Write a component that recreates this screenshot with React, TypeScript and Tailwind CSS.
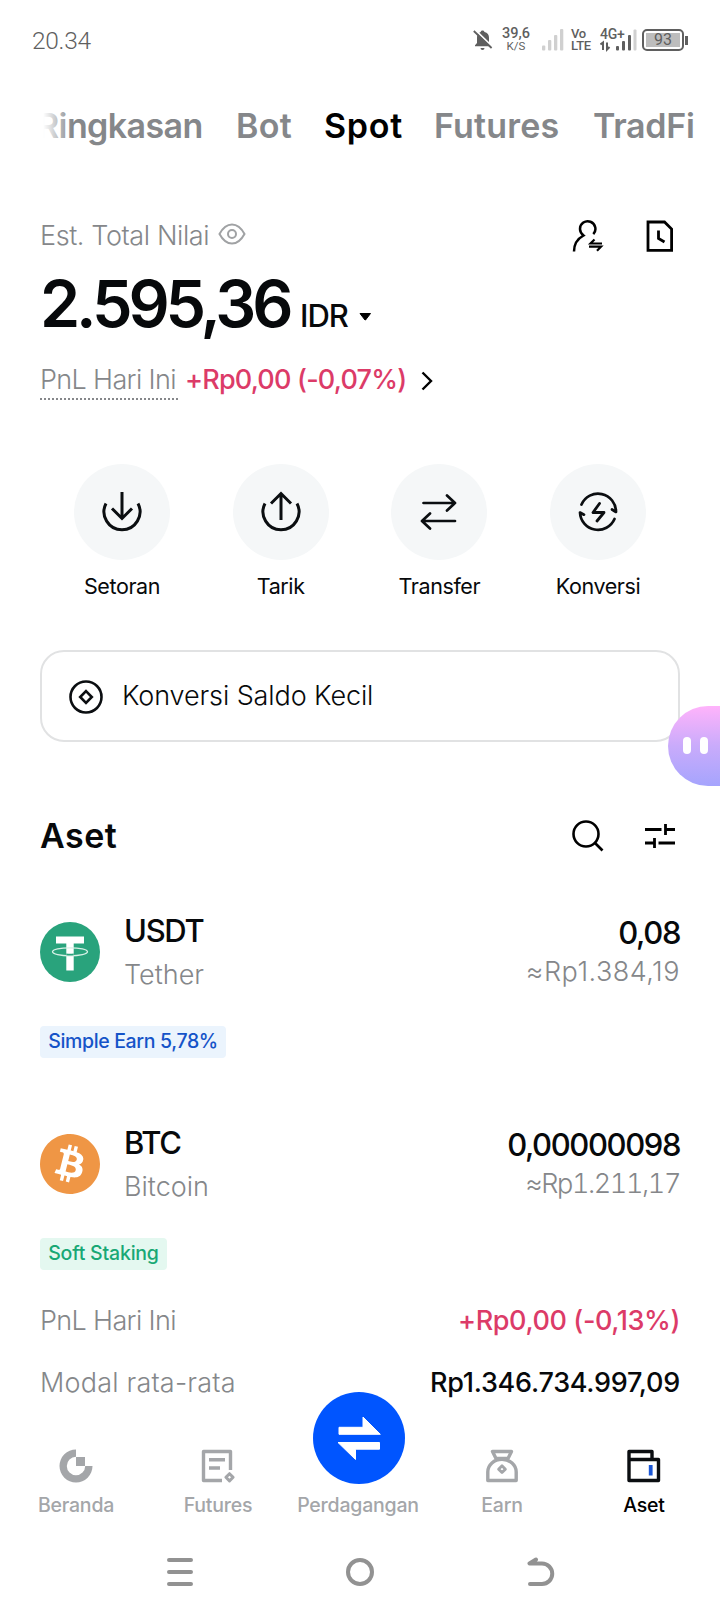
import React from 'react';
import { SiBitcoin } from 'react-icons/si';

const tabs = [
  { label: 'Bot', className: 'ml-[32px] w-[57px] tracking-[0.3px]' },
  { label: 'Spot', active: true, className: 'ml-[31px] w-[79px] tracking-[0.7px]' },
  { label: 'Futures', className: 'ml-[31px] w-[128px] tracking-[0.2px]' },
  { label: 'TradFi', className: 'ml-[31px] w-[102px] tracking-[-0.3px]' },
];

function StatusBar() {
  return (
    <div className="flex h-20 shrink-0 items-center pl-8 pr-8 font-[Roboto,sans-serif] text-[#5f5f5f]">
      <span className="pt-[2px] text-[24.5px] font-light tracking-[-0.3px]">20.34</span>
      <div className="ml-auto flex items-center">
        <svg width="20" height="22" viewBox="0 0 20 22" fill="#5f5f5f">
          <path d="M9.5 1.5a2 2 0 0 1 2 1.4A6 6 0 0 1 16 8.8V14l2 2.2v1H2v-1L4 14V8.8a6 6 0 0 1 3.600-5.900 2 2 0 0 1 1.900-1.400z" />
          <path d="M7.500 19h4a2 2 0 0 1-4 0z" />
          <path d="M1.500 .3l18.500 18" stroke="#fff" strokeWidth="2" />
          <path d="M.8 2l17.800 17" stroke="#5f5f5f" strokeWidth="1.800" />
        </svg>
        <div className="ml-2 flex w-[30px] flex-col items-center pb-[2px] leading-none">
          <span className="text-[14.5px] font-medium leading-[14px]">39,6</span>
          <span className="text-[11.5px] leading-[11px]">K/S</span>
        </div>
        <svg className="ml-[11px]" width="22" height="22" viewBox="0 0 22 22" fill="#d0d0d0">
          <rect x="0" y="16.500" width="3.300" height="5" rx="1" />
          <rect x="6" y="11" width="3.300" height="10.500" rx="1" />
          <rect x="12" y="6" width="3.300" height="15.500" rx="1" />
          <rect x="18" y="0" width="3.300" height="21.500" rx="1" />
        </svg>
        <div className="ml-[7px] flex w-[21px] flex-col text-[13px] font-medium leading-[12.5px] tracking-[-0.3px]">
          <span>Vo</span>
          <span>LTE</span>
        </div>
        <div className="relative ml-[8px] h-[24px] w-[38px]">
          <span className="absolute left-0 top-0 text-[14px] font-medium leading-[13px] tracking-[-0.3px]">4G+</span>
          <svg className="absolute left-0 top-0" width="38" height="24" viewBox="0 0 38 24" fill="#5f5f5f">
            <path d="M.5 16.500l2.500-2V22M7 14.500V21.500l2.500-2.500" fill="none" stroke="#5f5f5f" strokeWidth="2" />
            <rect x="16" y="18" width="3" height="4.500" rx="1" />
            <rect x="22" y="13" width="3" height="9.500" rx="1" />
            <rect x="28" y="7" width="3" height="15.500" rx="1" />
            <rect x="33.500" y="1.500" width="3" height="21" rx="1" fill="#d0d0d0" />
          </svg>
        </div>
        <div className="ml-[4px] flex items-center">
          <div className="flex h-[22px] w-[42px] items-center rounded-[5px] border-2 border-[#5f5f5f] p-[2px]">
            <div className="flex h-full w-full items-center justify-center bg-[#bdbdbd] text-[16px] leading-none">93</div>
          </div>
          <div className="ml-[1px] h-[9px] w-[3px] bg-[#5f5f5f]" />
        </div>
      </div>
    </div>
  );
}

function Tabs() {
  return (
    <nav className="relative flex h-[91px] shrink-0 items-center overflow-hidden whitespace-nowrap text-[34px] font-semibold text-[#85878a]">
      <span className="ml-[37px] w-[167px] tracking-[-0.6px]">Ringkasan</span>
      {tabs.map((tab) => (
        <span key={tab.label} className={`${tab.className} ${tab.active ? 'text-black' : ''}`}>
          {tab.label}
        </span>
      ))}
      {/* Fade at the scrolled edge */}
      <div className="absolute left-0 top-0 h-full w-[72px] bg-linear-to-r from-white from-60% to-transparent" />
    </nav>
  );
}

function Summary() {
  return (
    <section className="mt-[39px] shrink-0 px-10">
      <div className="flex h-[52px] items-center">
        <span className="text-[27px] font-light tracking-[-0.4px] text-[#85878a]">Est. Total Nilai</span>
        <svg className="mb-1 ml-[9px]" width="28" height="24" viewBox="0 0 28 24" fill="none" stroke="#a0a2a4" strokeWidth="2">
          <path d="M1.500 12C5 5.500 9 2.500 14 2.500S23 5.500 26.500 12C23 18.500 19 21.500 14 21.500S5 18.500 1.500 12z" />
          <circle cx="14" cy="12" r="4" />
        </svg>
        <svg className="ml-auto" width="32" height="34" viewBox="0 0 32 34" fill="none" stroke="#000" strokeWidth="2.500">
          <path d="M2 32.500c0-7.500 3.200-12.600 9.500-16C8.800 14.300 8 12.300 8 10a7.700 7.700 0 1 1 13.300 5.200" />
          <path d="M30 24.500H18.500l4-4M17 27.700h12l-4 4" strokeWidth="2.200" />
        </svg>
        <svg className="ml-[42px] mr-[6px]" width="28" height="32" viewBox="0 0 28 32" fill="none" stroke="#000" strokeWidth="2.800">
          <path d="M2 2h16.500l7.100 7v21.300H2z" />
          <path d="M12.500 10.500v8l6 3.500" />
        </svg>
      </div>

      <div className="flex h-[83px] items-baseline leading-[84px]">
        <span className="w-[252px] whitespace-nowrap text-[64.5px] font-semibold tracking-[-4.1px]">2.595,36</span>
        <span className="ml-[8px] w-[50px] text-[31px] font-medium tracking-[-1px]">IDR</span>
        <svg className="ml-[9px] self-center" width="12" height="40" viewBox="0 0 12 40">
          <path d="M1 29.500h10.500l-5 6.500h-.500z" fill="#000" stroke="#000" strokeLinejoin="round" />
        </svg>
      </div>

      <div className="flex h-[71px] items-center text-[27px]">
        <span className="relative w-[138px] whitespace-nowrap font-light tracking-[-0.65px] text-[#85878a]">
          PnL Hari Ini
          <span className="absolute inset-x-0 bottom-[1px] border-b-2 border-dotted border-[#85878a]" />
        </span>
        <span className="ml-[7px] w-[222px] whitespace-nowrap font-medium tracking-[-0.8px] text-[#dc3b68]">+Rp0,00 (-0,07%)</span>
        <svg className="ml-[13px]" width="13" height="20" viewBox="0 0 13 20" fill="none" stroke="#000" strokeWidth="2.400">
          <path d="M2.500 1.500l8.500 8.500-8.500 8.500" />
        </svg>
      </div>
    </section>
  );
}

function DepositIcon() {
  return (
    <svg width="48" height="48" viewBox="0 0 48 48" fill="none" stroke="#0b0e11" strokeWidth="3">
      <path d="M8 15.500a18 18 0 1 0 32 0M24 4v26M14 20.500l10 10 10-10" />
    </svg>
  );
}

function WithdrawIcon() {
  return (
    <svg width="48" height="48" viewBox="0 0 48 48" fill="none" stroke="#0b0e11" strokeWidth="3">
      <path d="M8 15.500a18 18 0 1 0 32 0M24 32V6M14 15.500l10-10 10 10" />
    </svg>
  );
}

function TransferIcon() {
  return (
    <svg width="48" height="48" viewBox="0 0 48 48" fill="none" stroke="#0b0e11" strokeWidth="2.700" strokeLinecap="round" strokeLinejoin="round">
      <path d="M8.500 15H40M32 7.500l8 7.500-8 7.500M40 33H7.500M15 25.500L7 33l8 7.500" />
    </svg>
  );
}

function ConvertIcon() {
  return (
    <svg width="48" height="48" viewBox="0 0 48 48" fill="none" stroke="#0b0e11" strokeWidth="2.700" strokeLinecap="round" strokeLinejoin="round">
      <path d="M7.500 16.500A18 18 0 0 1 42 24l-4-2.500M40.500 31A18 18 0 0 1 6 24.500l4 2.200" />
      <path d="M25.500 15.500l-6.500 9h11l-7 8.500" strokeWidth="2.800" />
    </svg>
  );
}

const actions = [
  { label: 'Setoran', icon: <DepositIcon /> },
  { label: 'Tarik', icon: <WithdrawIcon /> },
  { label: 'Transfer', icon: <TransferIcon /> },
  { label: 'Konversi', icon: <ConvertIcon /> },
];

function Actions() {
  return (
    <section className="mt-12 grid shrink-0 grid-cols-4 px-[42.700px]">
      {actions.map((action) => (
        <div key={action.label} className="flex flex-col items-center">
          <div className="flex h-24 w-24 items-center justify-center rounded-full bg-[#f5f7f8]">{action.icon}</div>
          <span className="mt-3 text-[21.5px] leading-7 tracking-[-0.4px]">{action.label}</span>
        </div>
      ))}
    </section>
  );
}

function TetherIcon() {
  return (
    <svg width="60" height="60" viewBox="0 0 60 60">
      <circle cx="30" cy="30" r="30" fill="#29a37c" />
      <path d="M16 14.500h28v7h-10.300V48.500h-7.400V21.500H16z" fill="#fff" />
      <ellipse cx="30" cy="29.800" rx="17.500" ry="4" fill="none" stroke="#d5f0e5" strokeWidth="1.300" />
      <path d="M26.300 31.500q3.700.5 7.400 0v1.800q-3.700.5-7.400 0z" fill="#29a37c" />
    </svg>
  );
}

function BitcoinIcon() {
  return (
    <div className="rounded-full bg-white">
      <SiBitcoin className="text-[#ef9645]" size={60} />
    </div>
  );
}

interface AssetProps {
  icon: React.ReactNode;
  symbol: string;
  name: string;
  amount: string;
  value: string;
  valueClass: string;
}

function Asset({ icon, symbol, name, amount, value, valueClass }: AssetProps) {
  return (
    <div className="flex h-20 items-center">
      {icon}
      <div className="ml-6 flex flex-col gap-[7px]">
        <span className="text-[31px] font-medium leading-[37px] tracking-[-1.3px]">{symbol}</span>
        <span className="text-[27px] font-light leading-[37px] text-[#85878a]">{name}</span>
      </div>
      <div className="ml-auto flex flex-col gap-[2px] text-right">
        <span className="text-[31px] font-medium leading-[37px] tracking-[-1.4px]">{amount}</span>
        <span className={`text-[27px] font-light leading-[38px] text-[#85878a] ${valueClass}`}>{value}</span>
      </div>
    </div>
  );
}

function Assets() {
  return (
    <section className="shrink-0 px-10">
      <div className="mt-16 flex h-[59px] items-center">
        <h2 className="text-[34px] font-semibold tracking-[0.5px]">Aset</h2>
        <svg className="ml-auto" width="34" height="34" viewBox="0 0 34 34" fill="none" stroke="#000" strokeWidth="2.600">
          <circle cx="15" cy="15" r="12.500" />
          <path d="M23.500 23.500l8 8" />
        </svg>
        <svg className="ml-[39px] mr-[4px]" width="32" height="26" viewBox="0 0 32 26" fill="none" stroke="#000" strokeWidth="2.800">
          <path d="M1 6.500h16.500M21.500 1v11M21.500 6.500H31M1 20h9.500M10.500 15v10M14.500 20H31" />
        </svg>
      </div>

      <div className="mt-[47px]">
        <Asset
          icon={<TetherIcon />}
          symbol="USDT"
          name="Tether"
          amount="0,08"
          value="≈Rp1.384,19"
          valueClass="tracking-[0.5px]"
        />
        <span className="mt-[34px] flex h-8 w-[186px] items-center justify-center rounded bg-[#ebf4fd] text-[19.5px] font-medium tracking-[-0.35px] text-[#1553c8]">
          Simple Earn 5,78%
        </span>
      </div>

      <div className="mt-[66px]">
        <Asset
          icon={<BitcoinIcon />}
          symbol="BTC"
          name="Bitcoin"
          amount="0,00000098"
          value="≈Rp1.211,17"
          valueClass="tracking-[-1.4px] tabular-nums"
        />
        <span className="mt-[34px] flex h-8 w-[127px] items-center justify-center rounded bg-[#e4f8f0] text-[19.5px] font-medium tracking-[-0.2px] text-[#18a875]">
          Soft Staking
        </span>
      </div>

      <div className="mt-[31px] flex h-10 items-center justify-between text-[27px]">
        <span className="font-light tracking-[-0.65px] text-[#85878a]">PnL Hari Ini</span>
        <span className="font-medium tracking-[-0.4px] text-[#dc3b68]">+Rp0,00 (-0,13%)</span>
      </div>
      <div className="mt-[22px] flex h-10 items-center justify-between text-[27px]">
        <span className="font-light tracking-[0.2px] text-[#85878a]">Modal rata-rata</span>
        <span className="font-medium tracking-[-0.25px]">Rp1.346.734.997,09</span>
      </div>
    </section>
  );
}

function HomeIcon() {
  return (
    <svg width="36" height="36" viewBox="0 0 36 36" fill="#a4a6a9">
      <path d="M18 1.500v7.300A9.200 9.200 0 1 0 27.200 18h7.300A16.500 16.500 0 1 1 18 1.500z" />
      <path d="M18 9h9v9h-9z" />
    </svg>
  );
}

function FuturesIcon() {
  return (
    <svg width="36" height="36" viewBox="0 0 36 36" fill="none" stroke="#a4a6a9" strokeWidth="3.400">
      <path d="M22 32.500H3.500v-29h27V22M9 11.700h16M9 20h11" strokeLinejoin="round" />
      <path d="M29.500 25.700l3.600 3.600-3.600 3.600-3.600-3.600z" strokeWidth="3" strokeLinejoin="round" />
    </svg>
  );
}

function EarnIcon() {
  return (
    <svg width="36" height="36" viewBox="0 0 36 36" fill="none" stroke="#a4a6a9" strokeWidth="3.400" strokeLinejoin="round">
      <path d="M8.500 3.500h19L24 10.500H12zM3.800 32.500V24a14 12.500 0 0 1 28.400 0v8.500z" />
      <path d="M18 17.800l3.400 3.400-3.400 3.400-3.400-3.400z" strokeWidth="2.800" />
    </svg>
  );
}

function WalletIcon() {
  return (
    <svg width="36" height="36" viewBox="0 0 36 36" fill="none" stroke="#0b0e11" strokeWidth="3.400" strokeLinejoin="round">
      <path d="M3 11.500h29.500V32.500H3zM3 11.500v-8h23v8" />
      <path d="M24.700 17v10.500" stroke="#1a56d6" strokeWidth="3.800" />
    </svg>
  );
}

const navItems = [
  { label: 'Beranda', icon: <HomeIcon /> },
  { label: 'Futures', icon: <FuturesIcon /> },
  { label: 'Perdagangan', icon: null },
  { label: 'Earn', icon: <EarnIcon /> },
  { label: 'Aset', icon: <WalletIcon />, active: true },
];

function BottomNav() {
  return (
    <nav className="relative flex h-[129px] shrink-0 justify-center text-[19.5px] font-medium leading-6 tracking-[-0.2px] text-[#a4a6a9]">
      {navItems.map((item) => (
        <div key={item.label} className={`flex w-[142px] flex-col items-center pt-[45px] ${item.icon ? '' : 'pr-1'}`}>
          <div className="h-9">{item.icon}</div>
          <span className={item.active ? 'mt-[9px] text-black' : 'mt-[9px]'}>{item.label}</span>
        </div>
      ))}
      <button className="absolute left-[313px] top-[-11px] flex h-[92px] w-[92px] items-center justify-center rounded-full bg-[#0055ff]">
        <svg width="46" height="46" viewBox="0 0 46 46" fill="#fff" stroke="#fff" strokeLinejoin="round">
          <path d="M3 12.300h24V2l17.300 17.300H3zM43.500 34.200h-24v10.300L2 27.500h41.500z" />
        </svg>
      </button>
    </nav>
  );
}

function SystemNav() {
  return (
    <div className="flex h-20 shrink-0 items-center justify-center gap-[150px]">
      <svg width="30" height="30" viewBox="0 0 30 30" stroke="#929292" strokeWidth="4" strokeLinecap="round">
        <path d="M4 3h22M4 15h22M4 27h22" />
      </svg>
      <svg width="30" height="30" viewBox="0 0 30 30" fill="none" stroke="#929292" strokeWidth="4">
        <circle cx="15" cy="15" r="12" />
      </svg>
      <svg width="30" height="30" viewBox="0 0 30 30" fill="none" stroke="#929292" strokeWidth="4" strokeLinecap="round" strokeLinejoin="round">
        <path d="M11 2.500L4.500 6.500H17a10 10 0 0 1 0 20.500H5" />
      </svg>
    </div>
  );
}

export default function App() {
  return (
    <div className="relative flex h-[1612px] w-[720px] flex-col overflow-hidden bg-white font-[Inter,sans-serif] text-[#07090b]">
      <StatusBar />
      <Tabs />
      <Summary />
      <Actions />

      <div className="mx-10 mt-[50px] flex h-[92px] shrink-0 items-center rounded-3xl border-2 border-[#e1e2e3] pl-[26px]">
        <svg width="36" height="36" viewBox="0 0 36 36" fill="none" stroke="#0b0e11" strokeWidth="2.600">
          <circle cx="18" cy="19" r="15.500" />
          <path d="M18 13.200l5.800 5.800-5.800 5.800-5.800-5.800z" />
        </svg>
        <span className="ml-[18px] text-[27px] font-light tracking-[-0.1px]">Konversi Saldo Kecil</span>
      </div>

      <Assets />
      <BottomNav />
      <SystemNav />

      {/* Floating assistant bubble */}
      <div className="absolute right-0 top-[706px] flex h-20 w-[52px] items-center gap-[9px] rounded-l-full bg-linear-to-b from-[#ffb3fb] via-[#c9abfb] to-[#a5a4fd] pb-[2px] pl-[15px]">
        <span className="h-[17px] w-[8px] rounded-full bg-white" />
        <span className="h-[17px] w-[8px] rounded-full bg-white" />
      </div>
    </div>
  );
}
